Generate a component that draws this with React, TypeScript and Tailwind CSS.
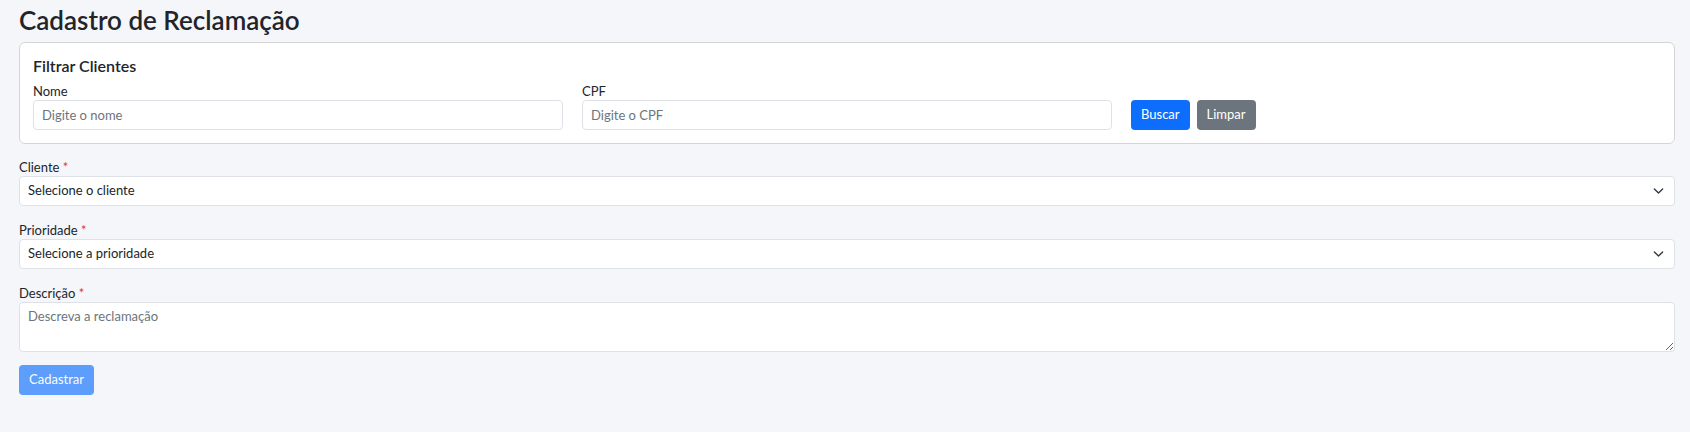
import React from "react";

const inputCls =
  "block w-full h-[30px] rounded-[4px] border border-[#dee2e6] bg-white px-2 text-[13px] text-[#212529] placeholder:text-[#6c757d] outline-none";

function Label({ text, required }: { text: string; required?: boolean }) {
  return (
    <label className="block text-[13px] leading-[18px] text-[#212529]">
      {text}
      {required && <span className="text-[#dc3545]"> *</span>}
    </label>
  );
}

function Chevron() {
  return (
    <svg
      className="pointer-events-none absolute right-[11px] top-1/2 -translate-y-1/2"
      width="11"
      height="11"
      viewBox="0 0 16 16"
      fill="none"
      stroke="#343a40"
      strokeWidth="2"
      strokeLinecap="round"
      strokeLinejoin="round"
    >
      <path d="m2 5 6 6 6-6" />
    </svg>
  );
}

function SelectField({ label, value }: { label: string; value: string }) {
  return (
    <div className="mb-[15px]">
      <Label text={label} required />
      <div className="relative">
        <select
          defaultValue=""
          className={inputCls + " appearance-none pr-8"}
        >
          <option value="">{value}</option>
        </select>
        <Chevron />
      </div>
    </div>
  );
}

export default function App() {
  return (
    <div className="min-h-screen bg-[#f5f6fa] pl-[19px] pr-[15px] pt-[5px] font-['Lato',sans-serif] text-[#212529]">
      <h1 className="mb-[6px] text-[26px] font-semibold leading-[31px]">
        Cadastro de Reclamação
      </h1>

      {/* Filtro */}
      <div className="mb-[14px] rounded-[6px] border border-[#d5d5d5] bg-white px-[13px] pt-[13px] pb-[13px]">
        <h2 className="mb-[7px] text-[16px] font-semibold leading-[19px]">
          Filtrar Clientes
        </h2>
        <div className="grid grid-cols-3 items-end gap-x-[19px]">
          <div>
            <Label text="Nome" />
            <input type="text" placeholder="Digite o nome" className={inputCls} />
          </div>
          <div>
            <Label text="CPF" />
            <input type="text" placeholder="Digite o CPF" className={inputCls} />
          </div>
          <div className="flex gap-[7px]">
            <button
              type="button"
              className="h-[30px] rounded-[4px] bg-[#0d6efd] px-[10px] text-[13px] text-white"
            >
              Buscar
            </button>
            <button
              type="button"
              className="h-[30px] rounded-[4px] bg-[#6c757d] px-[10px] text-[13px] text-white"
            >
              Limpar
            </button>
          </div>
        </div>
      </div>

      <SelectField label="Cliente" value="Selecione o cliente" />
      <SelectField label="Prioridade" value="Selecione a prioridade" />

      <div>
        <Label text="Descrição" required />
        <textarea
          placeholder="Descreva a reclamação"
          className="block h-[50px] w-full rounded-[4px] border border-[#dee2e6] bg-white px-2 py-1 text-[13px] leading-[19.5px] text-[#212529] placeholder:text-[#6c757d] outline-none"
        />
      </div>

      <button
        type="button"
        disabled
        className="mt-[13px] h-[30px] rounded-[4px] bg-[#0d6efd] px-[10px] text-[13px] text-white opacity-65"
      >
        Cadastrar
      </button>
    </div>
  );
}
